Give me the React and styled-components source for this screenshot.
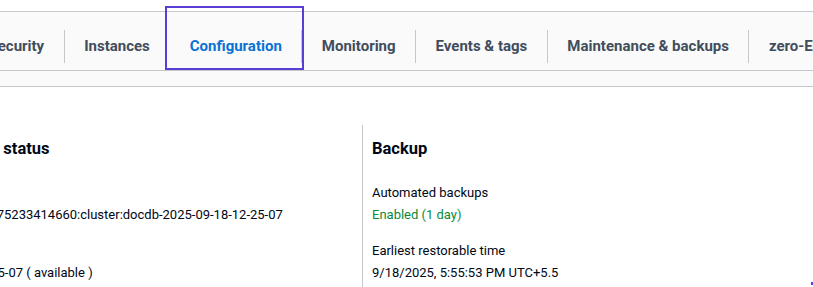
import React from "react";
import styled, { createGlobalStyle } from "styled-components";

const GlobalStyle = createGlobalStyle`
  html, body { margin: 0; padding: 0; background: #ffffff; }
  body { font-family: Roboto, "Liberation Sans", Arial, sans-serif; color: #000716; }
`;

const Viewport = styled.div`
  position: relative;
  width: 813px;
  height: 287px;
  overflow: hidden;
  background: #ffffff;
`;

const TopGap = styled.div`
  height: 11px;
  background: #ffffff;
`;

const TabBar = styled.div`
  height: 58px;
  border-top: 1px solid #c6c6cd;
  border-bottom: 1px solid #c6c6cd;
  background: #fafafa;
`;

const TabList = styled.div`
  display: flex;
  align-items: stretch;
  height: 100%;
  margin-left: -31px;
  white-space: nowrap;
`;

const Tab = styled.div`
  position: relative;
  display: flex;
  align-items: center;
  flex: none;
  padding: 10px 19.5px 0;
  font-size: 15px;
  font-weight: 700;
  color: ${(p) => (p.$active ? "#0972d3" : "#414d5c")};

  &::after {
    content: "";
    display: ${(p) => (p.$active ? "block" : "none")};
    position: absolute;
    left: -5px;
    right: -3px;
    top: -6px;
    bottom: 0;
    border: 2px solid #5a3dd3;
    pointer-events: none;
  }
`;

const Sep = styled.div`
  flex: none;
  align-self: center;
  margin-top: 10px;
  width: 1px;
  height: 33px;
  background: ${(p) => (p.$hidden ? "transparent" : "#c6c6cd")};
`;

const SubStrip = styled.div`
  height: 15px;
  background: #fafafa;
  border-bottom: 1px solid #c6c6cd;
`;

const Content = styled.div`
  display: flex;
  padding-top: 38px;
`;

const LeftCol = styled.div`
  flex: none;
  width: 499px;
  margin-left: -137px;
  padding-top: 13px;
  white-space: nowrap;
`;

const RightCol = styled.div`
  flex: 1;
  border-left: 1px solid #c6c6cd;
  padding: 13px 0 0 9px;
  height: 200px;
  white-space: nowrap;
`;

const Heading = styled.h2`
  margin: 0;
  font-size: 16.5px;
  line-height: 22px;
  font-weight: 700;
  color: #000716;
`;

const Field = styled.div`
  margin-top: ${(p) => p.$mt}px;
`;

const Label = styled.div`
  font-size: 13px;
  line-height: 22px;
  color: #000716;
`;

const Value = styled.div`
  font-size: 13px;
  line-height: 22px;
  color: ${(p) => (p.$ok ? "#0a8a37" : "#000716")};
`;

const FocusDot = styled.div`
  position: absolute;
  right: 0;
  bottom: 2px;
  width: 2px;
  height: 3px;
  background: #5a3dd3;
`;

const tabs = [
  "Security",
  "Instances",
  "Configuration",
  "Monitoring",
  "Events & tags",
  "Maintenance & backups",
  "zero-ETL integrations",
];

const ACTIVE = "Configuration";

export default function App() {
  return (
    <>
      <GlobalStyle />
      <Viewport>
        <TopGap />
        <TabBar>
          <TabList>
            {tabs.map((t, i) => (
              <React.Fragment key={t}>
                {i > 0 && <Sep $hidden={t === ACTIVE} />}
                <Tab $active={t === ACTIVE}>{t}</Tab>
              </React.Fragment>
            ))}
          </TabList>
        </TabBar>
        <SubStrip />
        <Content>
          <LeftCol>
            <Heading>Cluster replication status</Heading>
            <Field $mt={22}>
              <Label>ARN</Label>
              <Value>arn:aws:rds:us-east-1:975233414660:cluster:docdb-2025-09-18-12-25-07</Value>
            </Field>
            <Field $mt={14}>
              <Label>Primary instance</Label>
              <Value>docdb-2025-09-18-12-25-07 ( available )</Value>
            </Field>
          </LeftCol>
          <RightCol>
            <Heading>Backup</Heading>
            <Field $mt={22}>
              <Label>Automated backups</Label>
              <Value $ok>Enabled (1 day)</Value>
            </Field>
            <Field $mt={14}>
              <Label>Earliest restorable time</Label>
              <Value>9/18/2025, 5:55:53 PM UTC+5.5</Value>
            </Field>
          </RightCol>
        </Content>
        <FocusDot />
      </Viewport>
    </>
  );
}
